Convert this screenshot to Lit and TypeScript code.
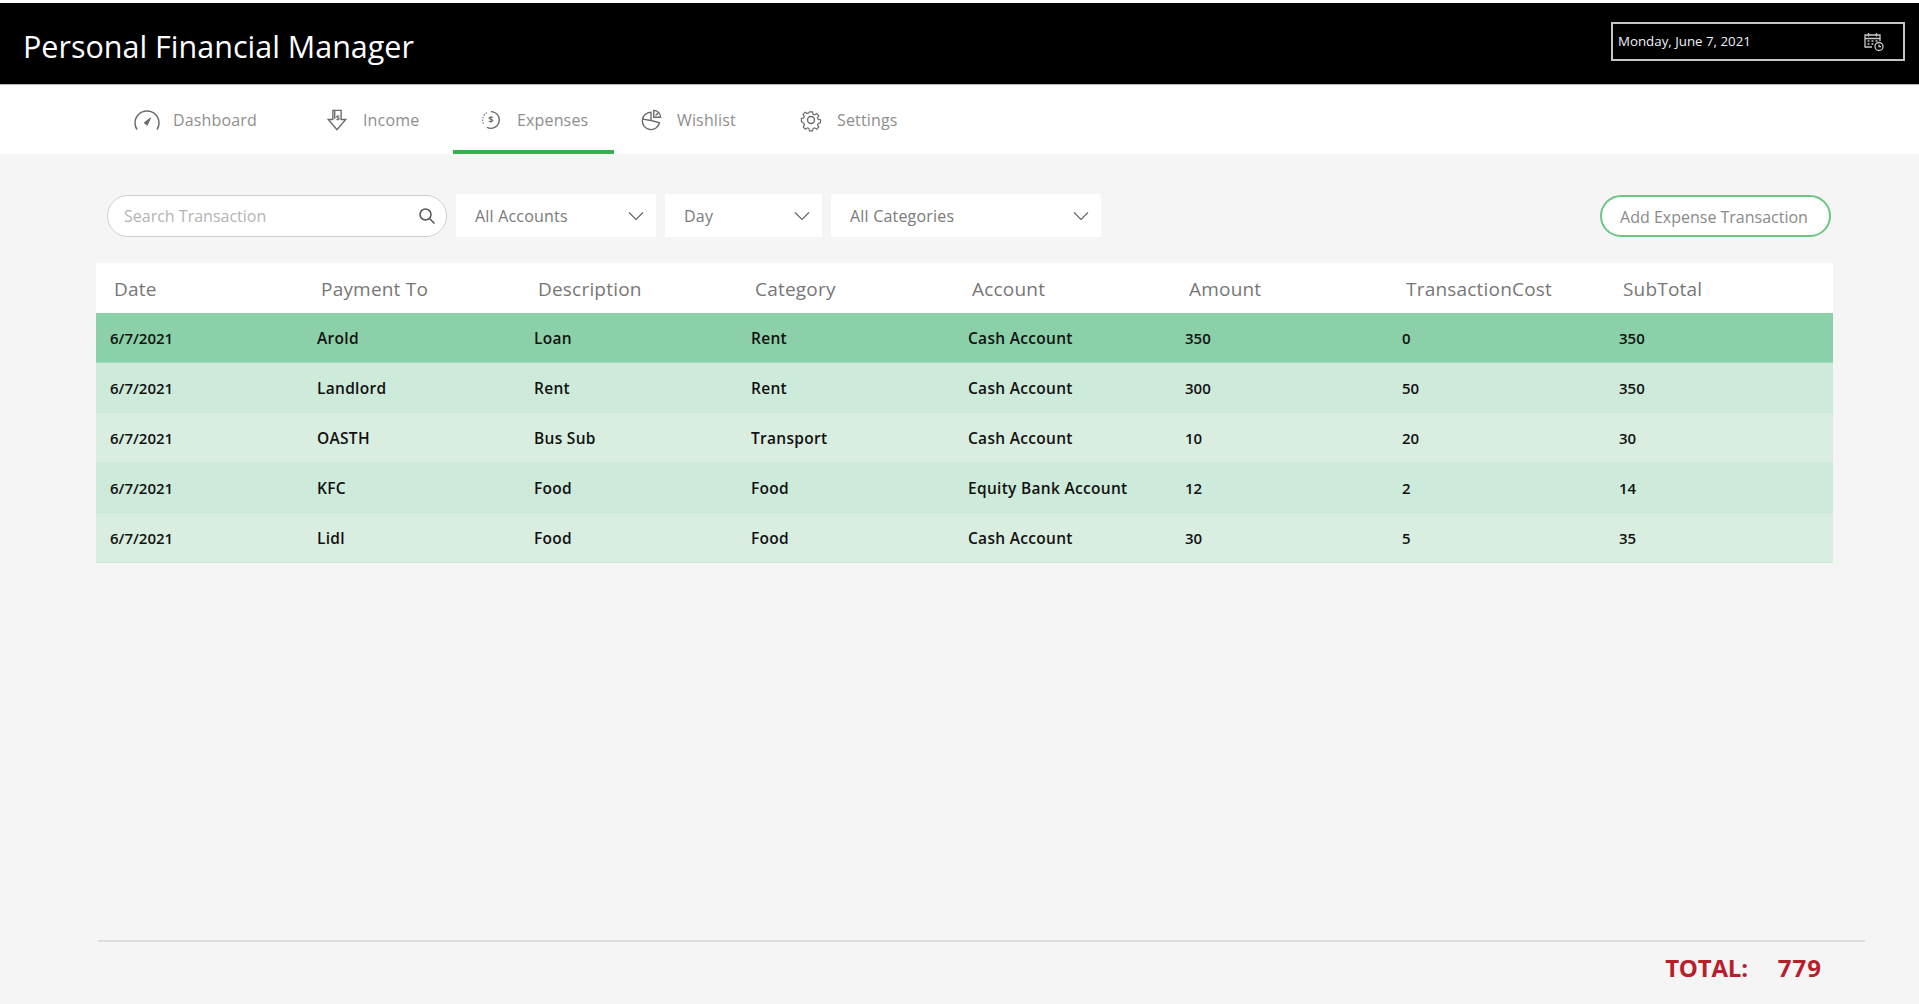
import { LitElement, css, html, svg } from 'lit';
import { customElement, state } from 'lit/decorators.js';

interface Expense {
  date: string;
  paidTo: string;
  description: string;
  category: string;
  account: string;
  amount: number;
  cost: number;
  subTotal: number;
}

const COLUMNS = ['Date', 'Payment To', 'Description', 'Category', 'Account', 'Amount', 'TransactionCost', 'SubTotal'];

const EXPENSES: Expense[] = [
  { date: '6/7/2021', paidTo: 'Arold', description: 'Loan', category: 'Rent', account: 'Cash Account', amount: 350, cost: 0, subTotal: 350 },
  { date: '6/7/2021', paidTo: 'Landlord', description: 'Rent', category: 'Rent', account: 'Cash Account', amount: 300, cost: 50, subTotal: 350 },
  { date: '6/7/2021', paidTo: 'OASTH', description: 'Bus Sub', category: 'Transport', account: 'Cash Account', amount: 10, cost: 20, subTotal: 30 },
  { date: '6/7/2021', paidTo: 'KFC', description: 'Food', category: 'Food', account: 'Equity Bank Account', amount: 12, cost: 2, subTotal: 14 },
  { date: '6/7/2021', paidTo: 'Lidl', description: 'Food', category: 'Food', account: 'Cash Account', amount: 30, cost: 5, subTotal: 35 },
];

const NAV_ICONS: Record<string, unknown> = {
  Dashboard: svg`<path d="M3 21.500C1.700 19.500 1 17.300 1 15 1 8.400 6.400 3 13 3s12 5.400 12 12c0 2.300-.7 4.500-2 6.500"/><path d="M10.200 14.800l6.300-4.800-3.300 7.200z" fill="currentColor" stroke-width="1"/>`,
  Income: svg`<path d="M7.500 1.500h9v10h5L12 22.500 2.500 11.500h5z"/><path d="M9.500 1.500v9"/><text x="13" y="12" text-anchor="middle" font-size="8" font-weight="700" fill="currentColor" stroke="none" font-family="Open Sans">$</text>`,
  Expenses: svg`<path d="M12 2a10 10 0 1 1-5 18.660"/><path d="M7 3.340A10 10 0 0 0 2 12a10 10 0 0 0 1.500 5.300" stroke-dasharray="1.500 1.800"/><text x="12" y="16" text-anchor="middle" font-size="11" font-weight="700" fill="currentColor" stroke="none" font-family="Open Sans">$</text>`,
  Wishlist: svg`<path d="M12 3.500A9.500 9.500 0 1 0 21.300 15L12 12.500z"/><path d="M12 12.500L2.800 11"/><path d="M15 1.500a7.500 7.500 0 0 1 7.500 7.500H15z"/><path d="M17 7l3-3"/>`,
  Settings: svg`<path d="M10 1.500h4l.7 3.100 1.900.8 2.700-1.700 2.800 2.800-1.700 2.700.8 1.900 3.100.7v4l-3.100.7-.8 1.900 1.700 2.700-2.800 2.800-2.700-1.700-1.900.8-.7 3.100h-4l-.7-3.100-1.900-.8-2.700 1.700-2.800-2.800 1.700-2.700-.8-1.900L-.5 14v-4l3.100-.7.8-1.900-1.700-2.700 2.800-2.800 2.700 1.700 1.900-.8z" transform="translate(1.900 1.900) scale(.84)"/><circle cx="12" cy="12" r="3.800"/>`,
};

const NAV_ITEMS = [
  { label: 'Dashboard', width: 192, iconWidth: 26, gap: 13, viewBox: '0 0 26 24' },
  { label: 'Income', width: 155, iconWidth: 22, gap: 15, viewBox: '0 0 24 24' },
  { label: 'Expenses', width: 159, iconWidth: 20, gap: 16, viewBox: '0 0 24 24' },
  { label: 'Wishlist', width: 160, iconWidth: 22, gap: 15, viewBox: '0 0 24 24' },
  { label: 'Settings', width: 160, iconWidth: 22, gap: 15, viewBox: '0 0 24 24' },
];

@customElement('app-root')
export class AppRoot extends LitElement {
  @state() private active = 'Expenses';

  static styles = css`
    :host {
      display: flex;
      flex-direction: column;
      height: 1004px;
      overflow: hidden;
      background: #f5f5f5;
      font-family: 'Open Sans', 'Noto Sans', sans-serif;
    }

    /* title bar */
    .top-strip {
      height: 3px;
      background: #fff;
      flex: none;
    }
    .topbar {
      height: 81px;
      flex: none;
      box-sizing: content-box;
      background: #000;
      border-bottom: 1px solid #b5b5b5;
      display: flex;
      align-items: center;
      justify-content: space-between;
      padding: 0 14px 0 23px;
    }
    .title {
      color: #fff;
      font-size: 30.5px;
      line-height: 40px;
      margin-top: 5px;
    }
    .date-box {
      box-sizing: border-box;
      width: 294px;
      height: 39px;
      margin-top: -4px;
      border: 2px solid #c4c4c4;
      display: flex;
      align-items: center;
      justify-content: space-between;
      padding: 0 18px 2px 5px;
      color: #eef2f7;
      font-size: 13.3px;
      font-weight: 500;
    }
    .date-box svg {
      margin-top: 2px;
    }

    /* tabs */
    .nav {
      flex: none;
      height: 69px;
      background: #fff;
      display: flex;
      padding-left: 134px;
    }
    .nav-item {
      box-sizing: border-box;
      display: flex;
      align-items: center;
      height: 69px;
      font-size: 16px;
      font-weight: 500;
      letter-spacing: 0.15px;
      color: #8e8e8e;
    }
    .nav-item svg {
      color: #6a6a6a;
      fill: none;
      stroke: currentColor;
      stroke-width: 1.5;
      flex: none;
    }
    .nav-item.active {
      position: relative;
    }
    .nav-item.active::after {
      content: '';
      position: absolute;
      left: -28px;
      width: 161px;
      bottom: 0;
      height: 4px;
      background: #35b04e;
    }

    /* filter row */
    .filters {
      flex: none;
      display: flex;
      align-items: center;
      height: 43px;
      margin: 40px 88px 26px 107px;
      font-size: 16px;
      color: #7a7a7a;
    }
    .search {
      box-sizing: border-box;
      width: 340px;
      height: 42px;
      background: #fff;
      border: 1px solid #cfcfcf;
      border-radius: 21px;
      display: flex;
      align-items: center;
      justify-content: space-between;
      padding: 0 10px 0 16px;
      color: #b4b4b4;
      margin-right: 9px;
    }
    .search svg {
      fill: none;
      stroke: #555;
      stroke-width: 1.5;
    }
    .select {
      box-sizing: border-box;
      height: 43px;
      background: #fff;
      display: flex;
      align-items: center;
      justify-content: space-between;
      padding: 0 12px 0 19px;
      margin-right: 9px;
      letter-spacing: 0.2px;
    }
    .select svg {
      fill: none;
      stroke: #666;
      stroke-width: 1.2;
    }
    .add {
      box-sizing: border-box;
      margin-left: auto;
      width: 231px;
      height: 42px;
      border: 2px solid #6cc581;
      border-radius: 21px;
      background: #fff;
      color: #8a8a8a;
      font: inherit;
      font-weight: 500;
      padding: 2px 3px 0 0;
    }

    /* table */
    .table {
      flex: none;
      margin: 0 86px 0 96px;
    }
    .row {
      display: grid;
      grid-template-columns: 207px repeat(7, 217px);
      align-items: center;
      padding-left: 14px;
      height: 50px;
      box-sizing: border-box;
      color: #111;
      font-size: 15.5px;
      line-height: 20px;
      font-weight: 600;
      letter-spacing: 0.3px;
      background: #d9eee0;
      border-bottom: 1px solid #c9e8d6;
    }
    .row.even {
      background: #ceeadb;
    }
    .row.selected {
      background: #8bd0a8;
      border-bottom-color: #a4dabb;
    }
    .num {
      font-size: 15px;
      letter-spacing: 0;
    }
    .row.head {
      background: #fff;
      border: 0;
      padding: 2px 0 0 18px;
      color: #777;
      font-size: 19px;
      font-weight: 500;
      letter-spacing: 0.2px;
    }

    /* total */
    .footer {
      box-sizing: border-box;
      margin: auto 54px 0 98px;
      border-top: 2px solid #dedede;
      height: 64px;
      display: flex;
      justify-content: flex-end;
      align-items: flex-start;
      padding: 9px 43px 0 0;
      color: #b7202a;
      font-size: 24px;
      font-weight: 700;
      gap: 30px;
    }
    .label {
      letter-spacing: -0.2px;
    }
    .value {
      letter-spacing: 1px;
    }
  `;

  private renderNav() {
    return html`<nav class="nav">
      ${NAV_ITEMS.map(
        (item) => html`<div
          class="nav-item ${item.label === this.active ? 'active' : ''}"
          style="width:${item.width}px;gap:${item.gap}px"
        >
          <svg width=${item.iconWidth} height="24" viewBox=${item.viewBox}>${NAV_ICONS[item.label]}</svg>
          <span>${item.label}</span>
        </div>`
      )}
    </nav>`;
  }

  private renderSelect(label: string, width: number) {
    return html`<div class="select" style="width:${width}px">
      <span>${label}</span>
      <svg width="16" height="10" viewBox="0 0 16 10"><path d="M1 1.5l7 7 7-7" /></svg>
    </div>`;
  }

  render() {
    const total = EXPENSES.reduce((sum, e) => sum + e.subTotal, 0);
    return html`
      <div class="top-strip"></div>
      <header class="topbar">
        <div class="title">Personal Financial Manager</div>
        <div class="date-box">
          <span>Monday, June 7, 2021</span>
          <svg width="22" height="20" viewBox="0 0 22 20" fill="none" stroke="#c9c9c9" stroke-width="1.3">
            <path d="M9 15H2V3h15v6" />
            <path d="M2 6.500h15M5.500 1v3.500M13.500 1v3.500M4.500 9h2M8.500 9h2M12.500 9h2M4.500 12h2M8.500 12h2" />
            <circle cx="16" cy="14.500" r="4" />
            <path d="M16 12.500v2.200h2" />
          </svg>
        </div>
      </header>
      ${this.renderNav()}
      <div class="filters">
        <div class="search">
          <span>Search Transaction</span>
          <svg width="18" height="18" viewBox="0 0 18 18"><circle cx="7.500" cy="7.500" r="5.500" /><path d="M11.500 11.500l5 5" /></svg>
        </div>
        ${this.renderSelect('All Accounts', 200)} ${this.renderSelect('Day', 157)} ${this.renderSelect('All Categories', 270)}
        <button class="add">Add Expense Transaction</button>
      </div>
      <div class="table">
        <div class="row head">${COLUMNS.map((c) => html`<div>${c}</div>`)}</div>
        ${EXPENSES.map(
          (e, i) => html`<div class="row ${i === 0 ? 'selected' : i % 2 === 1 ? 'even' : ''}">
            <div class="num">${e.date}</div>
            <div>${e.paidTo}</div>
            <div>${e.description}</div>
            <div>${e.category}</div>
            <div>${e.account}</div>
            <div class="num">${e.amount}</div>
            <div class="num">${e.cost}</div>
            <div class="num">${e.subTotal}</div>
          </div>`
        )}
      </div>
      <footer class="footer"><span class="label">TOTAL:</span><span class="value">${total}</span></footer>
    `;
  }
}
